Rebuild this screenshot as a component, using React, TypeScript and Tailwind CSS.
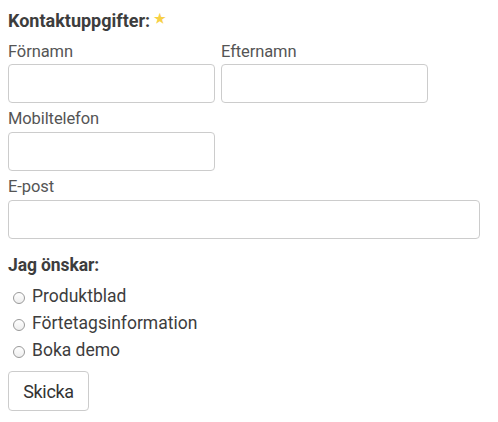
import React from "react";

const inputCls =
  "h-[39px] rounded-[4px] border border-[#cccccc] bg-white outline-none";

export default function App() {
  return (
    <div className="w-[498px] h-[422px] bg-white px-[8px] pt-[8px] font-['Roboto',sans-serif] text-[#555555]">
      <div className="flex items-center h-[24px] text-[18px] font-bold text-[#3d3d3d] tracking-[0px]">
        <span>Kontaktuppgifter:</span>
        <span className="ml-[4px] mt-[-3px] text-[#f7d046] text-[13px]">★</span>
      </div>
      <div className="mt-[8px] flex gap-[6px]">
        <div className="flex flex-col">
          <label className="h-[24px] text-[16.5px] leading-[24px] tracking-[-0.1px]">Förnamn</label>
          <input className={`${inputCls} w-[207px]`} />
        </div>
        <div className="flex flex-col">
          <label className="h-[24px] text-[16.5px] leading-[24px] tracking-[-0.1px]">Efternamn</label>
          <input className={`${inputCls} w-[207px]`} />
        </div>
      </div>
      <div className="mt-[4px] flex flex-col">
        <label className="h-[25px] text-[16.5px] leading-[24px] tracking-[-0.1px]">Mobiltelefon</label>
        <input className={`${inputCls} w-[207px]`} />
      </div>
      <div className="mt-[4px] flex flex-col">
        <label className="h-[25px] text-[16.5px] leading-[24px] tracking-[-0.1px]">E-post</label>
        <input className={`${inputCls} w-[472px]`} />
      </div>
      <div className="mt-[14px] h-[24px] text-[17.5px] font-bold text-[#3d3d3d] leading-[24px] tracking-[-0.1px]">
        Jag önskar:
      </div>
      <div className="mt-[6px] flex flex-col text-[17.5px] text-[#3d3d3d]">
        {["Produktblad", "Förtetagsinformation", "Boka demo"].map((t) => (
          <label key={t} className="flex items-center h-[27px]">
            <span className="ml-[5px] mr-[7px] mt-[3px] inline-block w-[12px] h-[12px] rounded-full border border-[#999999] bg-gradient-to-b from-white to-[#eeeeee]" />
            <span>{t}</span>
          </label>
        ))}
      </div>
      <button className="mt-[7px] w-[81px] h-[40px] rounded-[4px] border border-[#cccccc] bg-white text-[18px] text-[#333333] tracking-[-0.3px]">
        Skicka
      </button>
    </div>
  );
}
